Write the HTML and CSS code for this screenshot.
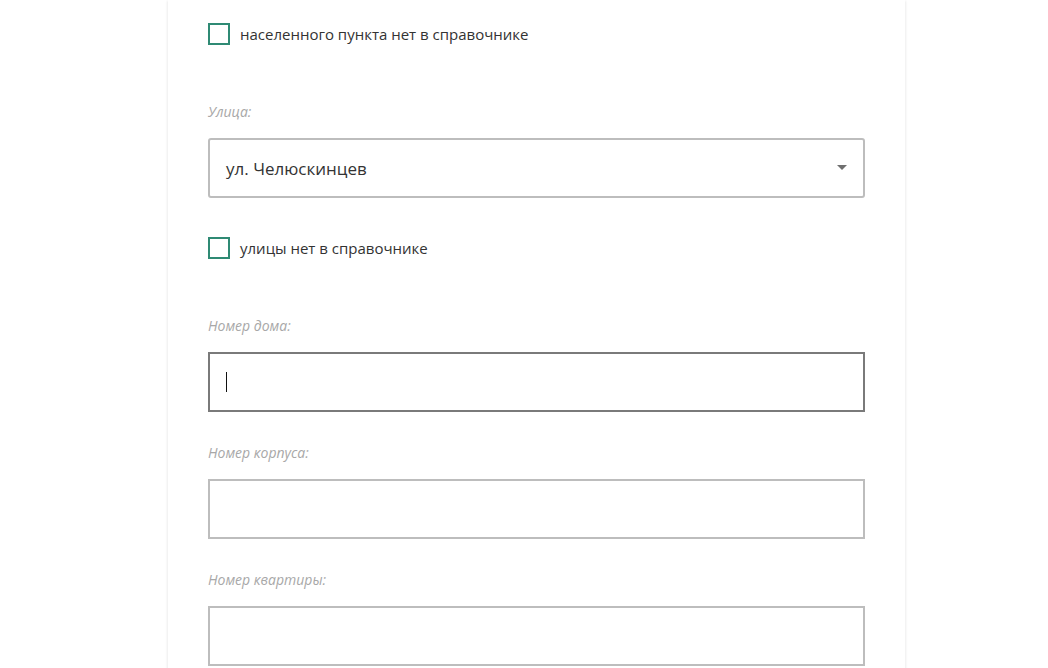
FILE: index.html
```html
<!DOCTYPE html>
<html lang="ru">
<head>
<meta charset="utf-8">
<title>Адрес</title>
<link rel="stylesheet" href="styles.css">
</head>
<body>
<div class="page">
  <div class="card">
    <label class="check first">
      <span class="box"></span>
      <span class="check-text">населенного пункта нет в справочнике</span>
    </label>

    <div class="field-label">Улица:</div>
    <div class="select">
      <span class="select-value">ул. Челюскинцев</span>
      <svg class="caret" width="10" height="6" viewBox="0 0 10 6"><path d="M0 0 H10 L5 5 Z" fill="#6f6f6f"/></svg>
    </div>

    <label class="check second">
      <span class="box"></span>
      <span class="check-text">улицы нет в справочнике</span>
    </label>

    <div class="field-label">Номер дома:</div>
    <div class="input focused"><span class="cursor"></span></div>

    <div class="field-label next">Номер корпуса:</div>
    <div class="input"></div>

    <div class="field-label next">Номер квартиры:</div>
    <div class="input"></div>
  </div>
</div>
</body>
</html>
```

FILE: styles.css
```css
html, body {
  margin: 0;
  padding: 0;
  background: #ffffff;
  height: 100%;
  overflow: hidden;
}
body {
  font-family: "Open Sans", "Noto Sans", sans-serif;
  color: #333333;
}
.page {
  display: flex;
  justify-content: flex-start;
  padding-left: 168px;
}
.card {
  width: 657px;
  min-height: 700px;
  padding: 0 40px;
  background: #ffffff;
  box-shadow: -2px 0 2px -1px #ededed, 2px 0 2px -1px #ededed;
  display: flex;
  flex-direction: column;
}
.check {
  display: flex;
  align-items: center;
  gap: 10px;
  height: 22px;
}
.check.first { margin-top: 23px; }
.check.second { margin-top: 39px; }
.box {
  width: 18px;
  height: 18px;
  border: 2px solid #2f8a74;
  background: #fff;
  flex: none;
}
.check-text {
  font-size: 15px;
  color: #333;
  line-height: 22px;
}
.field-label {
  margin-top: 57px;
  font-size: 14px;
  font-style: italic;
  color: #a8a8a8;
  line-height: 20px;
}
.field-label.next { margin-top: 31px; }
.select, .input {
  margin-top: 16px;
  height: 56px;
  border: 2px solid #bdbdbd;
  box-sizing: content-box;
  display: flex;
  align-items: center;
}
.select {
  border-radius: 3px;
  padding: 0 16px 0 16px;
  justify-content: space-between;
  width: 621px;
}
.select-value {
  font-size: 17px;
  color: #333;
}
.input {
  width: 653px;
  padding: 0;
}
.input.focused {
  border-color: #7a7a7a;
}
.cursor {
  display: block;
  width: 1px;
  height: 20px;
  background: #111;
  margin-left: 16px;
}
```
